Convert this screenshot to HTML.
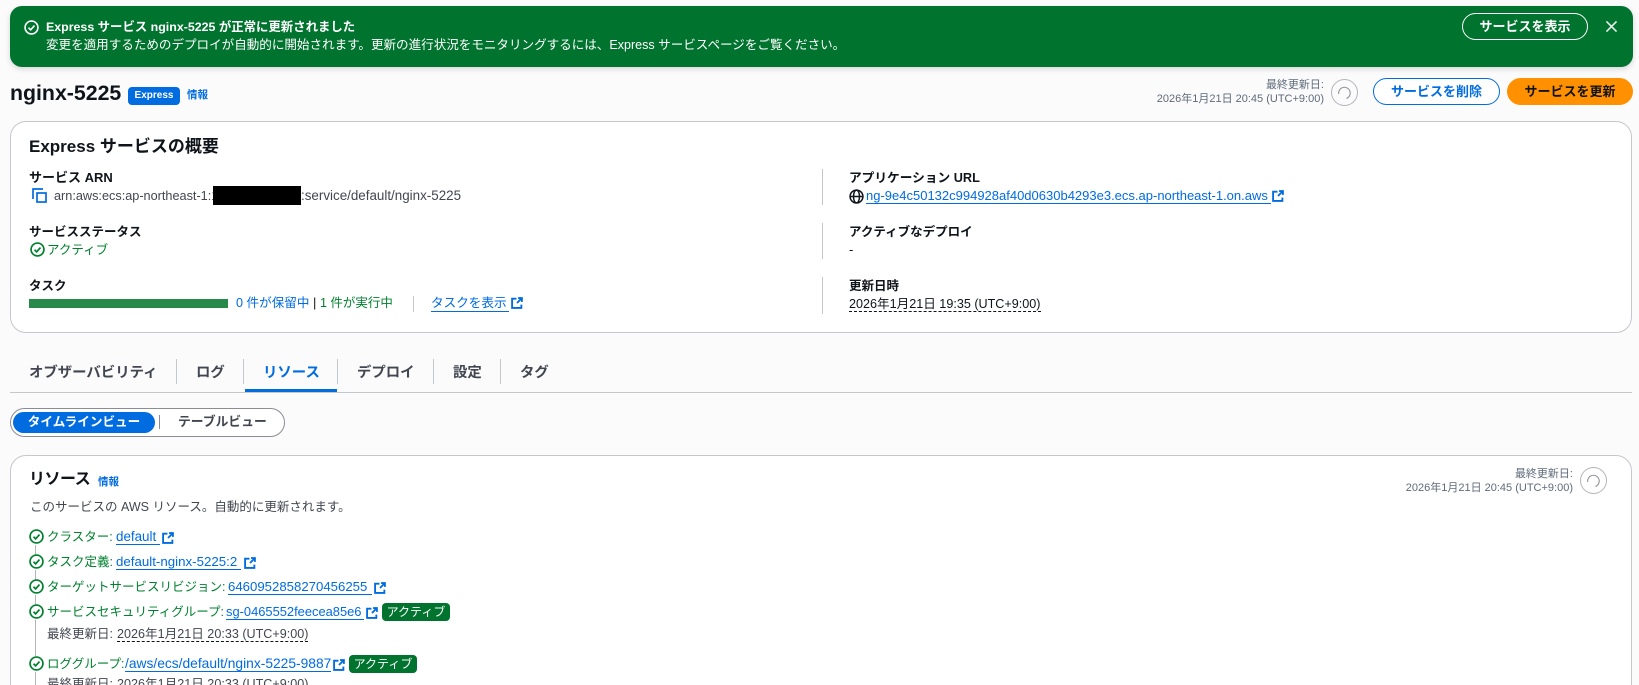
<!DOCTYPE html>
<html lang="ja"><head><meta charset="utf-8"><title>nginx-5225</title>
<style>
*{box-sizing:border-box}
html,body{margin:0;padding:0;width:1639px;height:685px;overflow:hidden;background:#fbfbfc}
body{position:relative;font-family:"Liberation Sans","Noto Sans CJK JP",sans-serif;font-size:14px;color:#0f141a}
.t{position:absolute;line-height:20px;height:20px;white-space:nowrap}
.b{font-weight:700}
.a{color:#006ce0}
.g{color:#00802f}
.m{color:#424650}
.s{color:#5f6b7a;font-size:11px}
.box{position:absolute}
.u{position:absolute;height:1px;background:#006ce0}
.d{position:absolute;height:0;border-top:1px dashed #0f141a}
.v{position:absolute;width:1px;background:#c6c6cd}
svg{position:absolute;overflow:visible;fill:none}
.btn{position:absolute;border-radius:20px;text-align:center;font-weight:700;font-size:13px;line-height:25px;height:27px}
.badge{position:absolute;background:#00732e;color:#fff;border-radius:4px;font-size:12px;text-align:center;line-height:18px;height:18px;width:68px}
.card{position:absolute;left:10px;width:1622px;background:#fff;border:1px solid #c6c6cd;border-radius:16px}
.tab{font-size:14.4px;top:363px;font-weight:700}
.l{font-size:12.5px}
.dt{font-size:12.6px}
</style></head><body>

<div class="box" style="left:10px;top:6px;width:1623px;height:61px;background:#00732e;border-radius:12px;box-shadow:0 2px 6px rgba(0,0,0,.15)"></div>
<svg style="left:24px;top:20px" width="15" height="15" viewBox="0 0 14 14" stroke="#fff" stroke-width="1.5"><circle cx="7" cy="7" r="6"/><path d="M4.2 7.2l2 2 3.6-4"/></svg>
<span class="t b" style="left:46px;top:17px;color:#fff;font-size:12.4px">Express サービス nginx-5225 が正常に更新されました</span>
<span class="t" style="left:46px;top:34.500px;color:#fff;font-size:12.56px">変更を適用するためのデプロイが自動的に開始されます。更新の進行状況をモニタリングするには、Express サービスページをご覧ください。</span>
<div class="btn" style="left:1462px;top:13px;width:126px;border:1px solid #fff;color:#fff">サービスを表示</div>
<svg style="left:1606px;top:21px" width="11" height="11" viewBox="0 0 12 12" stroke="#e6ece8" stroke-width="1.8"><path d="M0.5 0.5l11 11M11.500 0.5l-11 11"/></svg>

<span class="t b" style="left:10px;top:83px;font-size:21.3px">nginx-5225</span>
<div class="box" style="left:128px;top:87px;width:52px;height:18px;background:#006ce0;border-radius:4px;color:#fff;font-size:10px;font-weight:700;text-align:center;line-height:18px">Express</div>
<span class="t a b" style="left:187px;top:85px;font-size:10.5px">情報</span>

<span class="t s" style="right:315px;top:75px">最終更新日:</span>
<span class="t s" style="right:315px;top:89px">2026年1月21日 20:45 (UTC+9:00)</span>
<svg style="left:1331px;top:79px" width="27" height="27" viewBox="0 0 27 27" stroke="#8c8c94"><circle cx="13.5" cy="13.5" r="13" stroke="#b4b4bb"/><path d="M7.700 15A5.800 5.800 0 1 1 15.500 19.500"/></svg>
<div class="btn" style="left:1373px;top:78px;width:127px;background:#fff;border:1px solid #006ce0;color:#006ce0">サービスを削除</div>
<div class="btn" style="left:1507px;top:78px;width:126px;background:#ff9000;line-height:27px;color:#0f141a">サービスを更新</div>

<div class="card" style="top:121px;height:212px"></div>
<span class="t b" style="left:29px;top:137px;font-size:17px">Express サービスの概要</span>
<span class="t b" style="left:29px;top:168px;font-size:13px">サービス ARN</span>
<svg style="left:32px;top:188px" width="15" height="15" viewBox="0 0 15 15" stroke="#006ce0" stroke-width="1.7"><path d="M1 11V1h10"/><rect x="5" y="5" width="9" height="9"/></svg>
<span class="t m" style="left:54px;top:186px;font-size:12.7px">arn:aws:ecs:ap-northeast-1:1</span>
<div class="box" style="left:213px;top:186px;width:88px;height:19px;background:#000"></div>
<span class="t m" style="left:301px;top:186px;font-size:13.4px">:service/default/nginx-5225</span>
<span class="t b l" style="left:29px;top:222px">サービスステータス</span>
<svg style="left:29.500px;top:241.500px" width="15" height="15" viewBox="0 0 14 14" stroke="#00802f" stroke-width="1.6"><circle cx="7" cy="7" r="6"/><path d="M4.2 7.2l2 2 3.6-4"/></svg>
<span class="t g l" style="left:47px;top:240px">アクティブ</span>
<span class="t b l" style="left:29px;top:276px">タスク</span>
<div class="box" style="left:29px;top:299px;width:199px;height:9px;background:#288a4a"></div>
<span class="t a dt" style="left:236px;top:293px">0 件が保留中</span>
<span class="t" style="left:313px;top:293px;font-size:13px">|</span>
<span class="t g l" style="left:320px;top:293px">1 件が実行中</span>
<div class="v" style="left:413px;top:296px;height:16px"></div>
<span class="t a dt" style="left:431px;top:293px">タスクを表示</span>
<div class="u" style="left:431px;top:311px;width:78px"></div>
<svg style="left:511px;top:297px" width="12" height="12" viewBox="0 0 11 11" stroke="#006ce0" stroke-width="1.7"><path d="M5 1.500H1v8.500h8.500V7M5.500 5.500L10 1M6.500 1H10v3.500"/></svg>

<div class="v" style="left:822px;top:169px;height:36px"></div>
<div class="v" style="left:822px;top:223px;height:36px"></div>
<div class="v" style="left:822px;top:277px;height:37px"></div>
<span class="t b" style="left:849px;top:168px;font-size:12.7px">アプリケーション URL</span>
<svg style="left:848.500px;top:188.500px" width="15" height="15" viewBox="0 0 14 14" stroke="#0f141a" stroke-width="1.4"><circle cx="7" cy="7" r="6"/><ellipse cx="7" cy="7" rx="2.800" ry="6"/><path d="M1 7h12"/></svg>
<span class="t a" style="left:866px;top:186px;font-size:13px">ng-9e4c50132c994928af40d0630b4293e3.ecs.ap-northeast-1.on.aws</span>
<div class="u" style="left:866px;top:203px;width:405px"></div>
<svg style="left:1272px;top:190px" width="12" height="12" viewBox="0 0 11 11" stroke="#006ce0" stroke-width="1.7"><path d="M5 1.500H1v8.500h8.500V7M5.500 5.500L10 1M6.500 1H10v3.500"/></svg>
<span class="t b l" style="left:849px;top:222px">アクティブなデプロイ</span>
<span class="t" style="left:849px;top:240px;font-size:13px">-</span>
<span class="t b l" style="left:849px;top:276px">更新日時</span>
<span class="t dt" style="left:849px;top:294px">2026年1月21日 19:35 (UTC+9:00)</span>
<div class="d" style="left:849px;top:311px;width:192px"></div>

<span class="t tab m" style="left:29px">オブザーバビリティ</span>
<div class="v" style="left:176px;top:359px;height:25px"></div>
<span class="t tab m" style="left:196px">ログ</span>
<div class="v" style="left:243px;top:359px;height:25px"></div>
<span class="t tab a" style="left:263px">リソース</span>
<div class="v" style="left:337px;top:359px;height:25px"></div>
<span class="t tab m" style="left:357px">デプロイ</span>
<div class="v" style="left:433px;top:359px;height:25px"></div>
<span class="t tab m" style="left:453px">設定</span>
<div class="v" style="left:500px;top:359px;height:25px"></div>
<span class="t tab m" style="left:520px">タグ</span>
<div class="box" style="left:10px;top:392px;width:1622px;height:1px;background:#c6c6cd"></div>
<div class="box" style="left:245px;top:389px;width:92px;height:3px;background:#006ce0"></div>

<div class="box" style="left:10px;top:408px;width:275px;height:29px;border:1px solid #8c8c94;border-radius:15px;background:#fff"></div>
<div class="box" style="left:13px;top:412px;width:142px;height:21px;background:#006ce0;border-radius:11px;color:#fff;font-size:12.6px;font-weight:700;text-align:center;line-height:20px">タイムラインビュー</div>
<div class="v" style="left:159px;top:415px;height:14px;background:#8c8c94"></div>
<span class="t b m" style="left:178px;top:412px;font-size:12.8px">テーブルビュー</span>

<div class="card" style="top:455px;height:260px"></div>
<span class="t b" style="left:29px;top:470px;font-size:16px;letter-spacing:-.5px">リソース</span>
<span class="t a b" style="left:98px;top:472px;font-size:10.5px">情報</span>
<span class="t m" style="left:30px;top:497px;font-size:12.5px">このサービスの AWS リソース。自動的に更新されます。</span>
<span class="t s" style="right:66px;top:464px">最終更新日:</span>
<span class="t s" style="right:66px;top:478px">2026年1月21日 20:45 (UTC+9:00)</span>
<svg style="left:1580px;top:467px" width="27" height="27" viewBox="0 0 27 27" stroke="#8c8c94"><circle cx="13.500" cy="13.500" r="13" stroke="#b4b4bb"/><path d="M7.700 15A5.800 5.800 0 1 1 15.500 19.500"/></svg>

<div class="v" style="left:35px;top:545px;height:10px;background:#b4b4bb"></div>
<div class="v" style="left:35px;top:570px;height:10px;background:#b4b4bb"></div>
<div class="v" style="left:35px;top:595px;height:10px;background:#b4b4bb"></div>
<div class="v" style="left:35px;top:620px;height:36px;background:#b4b4bb"></div>
<div class="v" style="left:35px;top:672px;height:13px;background:#b4b4bb"></div>

<svg style="left:28.500px;top:529px" width="15" height="15" viewBox="0 0 14 14" stroke="#00802f" stroke-width="1.6"><circle cx="7" cy="7" r="6"/><path d="M4.200 7.200l2 2 3.600-4"/></svg>
<span class="t g l" style="left:47px;top:527px">クラスター:</span>
<span class="t a" style="left:116px;top:527px;font-size:13.4px">default</span>
<div class="u" style="left:116px;top:544px;width:44px"></div>
<svg style="left:161.500px;top:531.500px" width="12" height="12" viewBox="0 0 11 11" stroke="#006ce0" stroke-width="1.7"><path d="M5 1.500H1v8.500h8.500V7M5.500 5.500L10 1M6.500 1H10v3.500"/></svg>

<svg style="left:28.500px;top:554px" width="15" height="15" viewBox="0 0 14 14" stroke="#00802f" stroke-width="1.6"><circle cx="7" cy="7" r="6"/><path d="M4.200 7.200l2 2 3.600-4"/></svg>
<span class="t g l" style="left:47px;top:552px">タスク定義:</span>
<span class="t a" style="left:116px;top:552px;font-size:13.3px">default-nginx-5225:2</span>
<div class="u" style="left:116px;top:569px;width:125px"></div>
<svg style="left:243.500px;top:556.500px" width="12" height="12" viewBox="0 0 11 11" stroke="#006ce0" stroke-width="1.7"><path d="M5 1.500H1v8.500h8.500V7M5.500 5.500L10 1M6.500 1H10v3.500"/></svg>

<svg style="left:28.500px;top:579px" width="15" height="15" viewBox="0 0 14 14" stroke="#00802f" stroke-width="1.6"><circle cx="7" cy="7" r="6"/><path d="M4.200 7.200l2 2 3.600-4"/></svg>
<span class="t g l" style="left:47px;top:577px">ターゲットサービスリビジョン:</span>
<span class="t a" style="left:228px;top:577px;font-size:13.2px">6460952858270456255</span>
<div class="u" style="left:228px;top:594px;width:144px"></div>
<svg style="left:373.500px;top:581.500px" width="12" height="12" viewBox="0 0 11 11" stroke="#006ce0" stroke-width="1.7"><path d="M5 1.500H1v8.500h8.500V7M5.500 5.500L10 1M6.500 1H10v3.500"/></svg>

<svg style="left:28.500px;top:604px" width="15" height="15" viewBox="0 0 14 14" stroke="#00802f" stroke-width="1.6"><circle cx="7" cy="7" r="6"/><path d="M4.200 7.200l2 2 3.600-4"/></svg>
<span class="t g l" style="left:47px;top:602px">サービスセキュリティグループ:</span>
<span class="t a" style="left:226px;top:602px;font-size:12.9px">sg-0465552feecea85e6</span>
<div class="u" style="left:226px;top:619px;width:138px"></div>
<svg style="left:365.500px;top:606.500px" width="12" height="12" viewBox="0 0 11 11" stroke="#006ce0" stroke-width="1.7"><path d="M5 1.500H1v8.500h8.500V7M5.500 5.500L10 1M6.500 1H10v3.500"/></svg>
<div class="badge" style="left:382px;top:603px">アクティブ</div>
<span class="t m l" style="left:47px;top:624px">最終更新日:</span>
<span class="t m dt" style="left:117px;top:624px">2026年1月21日 20:33 (UTC+9:00)</span>
<div class="d" style="left:117px;top:641px;width:191px"></div>

<svg style="left:28.500px;top:656px" width="15" height="15" viewBox="0 0 14 14" stroke="#00802f" stroke-width="1.6"><circle cx="7" cy="7" r="6"/><path d="M4.200 7.200l2 2 3.600-4"/></svg>
<span class="t g l" style="left:47px;top:654px">ロググループ:</span>
<span class="t a" style="left:125px;top:654px;font-size:13.8px">/aws/ecs/default/nginx-5225-9887</span>
<div class="u" style="left:125px;top:671px;width:206px"></div>
<svg style="left:332.500px;top:658.500px" width="12" height="12" viewBox="0 0 11 11" stroke="#006ce0" stroke-width="1.7"><path d="M5 1.500H1v8.500h8.500V7M5.500 5.500L10 1M6.500 1H10v3.500"/></svg>
<div class="badge" style="left:349px;top:655px">アクティブ</div>
<span class="t m l" style="left:47px;top:674px">最終更新日:</span>
<span class="t m dt" style="left:117px;top:674px">2026年1月21日 20:33 (UTC+9:00)</span>

</body></html>
